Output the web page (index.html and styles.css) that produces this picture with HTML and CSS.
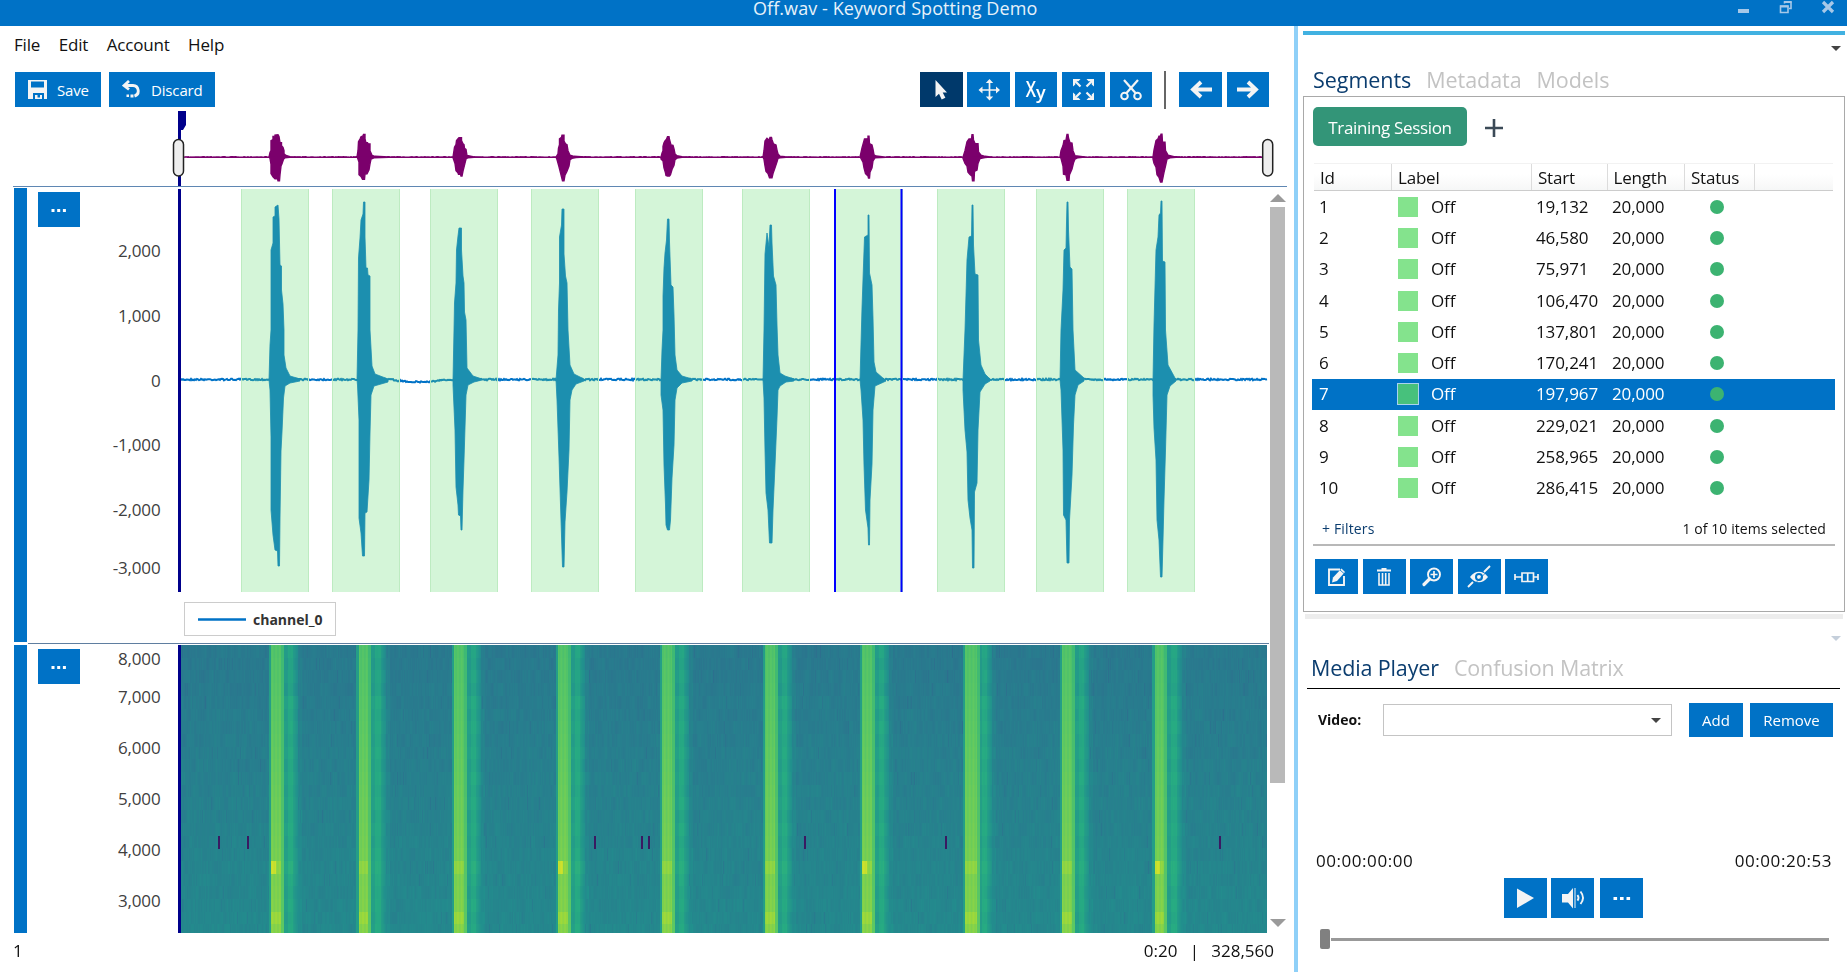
FILE: index.html
```html
<!DOCTYPE html>
<html lang="en">
<head>
<meta charset="utf-8">
<title>Off.wav - Keyword Spotting Demo</title>
<link rel="stylesheet" href="styles.css">
</head>
<body>
<header class="titlebar">
  <h1 class="title">Off.wav - Keyword Spotting Demo</h1>
  <svg class="win-controls" width="100" height="16" viewBox="0 0 100 16">
    <rect x="0" y="9" width="11" height="4" fill="#a6c8e8"/>
    <path d="M46.500 3.500V2H53v6.500h-2M42.500 6H50v6.500h-7.500z" fill="none" stroke="#a6c8e8" stroke-width="1.600"/>
    <path d="M42 6.500h8.500M46 2h7.500" stroke="#a6c8e8" stroke-width="2.200"/>
    <path d="M85 2l10 10M95 2L85 12" stroke="#a6c8e8" stroke-width="3.200"/>
  </svg>
</header>
<div class="workspace">
  <main class="editor">
    <nav class="menu"><span>File</span><span>Edit</span><span>Account</span><span>Help</span></nav>
    <div class="toolbar">
      <button class="btn save"><svg width="19" height="19" viewBox="0 0 19 19"><path fill="#f4f4f4" fill-rule="evenodd" d="M0 0h19v19h-3v-6H5v6H0zM3 1.500v6h13v-6zM7 15h2.500v2.500H12V15h2v4H7z"/></svg><span>Save</span></button>
      <button class="btn discard"><svg width="19" height="19" viewBox="0 0 19 19"><path d="M7 1L2 5.500L7 9.500M2.500 5.500H11a5.500 5.500 0 0 1 1.500 10.700" fill="none" stroke="#f4f4f4" stroke-width="2.800"/><path d="M8.500 14.500h3v3h-3zM4.500 14.500h2.500v2.500H4.500z" fill="#f4f4f4"/></svg><span>Discard</span></button>
      <div class="tools">
        <button class="tool active"><svg width="42" height="35" viewBox="0 0 42 35"><path fill="#f4f4f4" d="M15.500 8v17l3.500-3.300 2.700 5.800 3.700-1.700-2.700-5.300h4.300z"/></svg></button>
        <button class="tool"><svg width="42" height="35" viewBox="0 0 42 35"><path d="M12 18h19M21.500 9v18" stroke="#f4f4f4" stroke-width="1.700"/><path fill="#f4f4f4" d="M21.500 7l3.700 4h-7.400zM21.500 28.500l3.700-4h-7.400zM10.500 18l4-3.600v7.200zM32 18l-4-3.600v7.200z"/></svg></button>
        <button class="tool xy"><span>X</span><span class="y">y</span></button>
        <button class="tool"><svg width="42" height="35" viewBox="0 0 42 35"><path d="M13 9l5.500 5.500M30 9l-5.500 5.500M13 26l5.500-5.500M30 26l-5.500-5.500" stroke="#f4f4f4" stroke-width="2.200"/><path fill="#f4f4f4" d="M11 7h7.500l-2 2.300h-3.200v3.200l-2.300 2zM32 7h-7.500l2 2.300h3.200v3.200l2.300 2zM11 28h7.500l-2-2.300h-3.200v-3.200l-2.300-2zM32 28h-7.500l2-2.300h3.200v-3.200l2.300-2z"/></svg></button>
        <button class="tool"><svg width="42" height="35" viewBox="0 0 42 35"><g fill="none" stroke="#f4f4f4" stroke-width="2"><circle cx="14.500" cy="24" r="3.300"/><circle cx="27.500" cy="24" r="3.300"/><path d="M16.500 21L28 8M25.500 21L14 8" stroke-width="2.200"/></g></svg></button>
        <i class="tool-sep"></i>
        <button class="tool"><svg width="42" height="35" viewBox="0 0 42 35"><path d="M32 17.500H13M21 10L13 17.500l8 7.500" fill="none" stroke="#f4f4f4" stroke-width="3.800"/></svg></button>
        <button class="tool"><svg width="42" height="35" viewBox="0 0 42 35"><path d="M10 17.500h19M21 10L29 17.500l-8 7.500" fill="none" stroke="#f4f4f4" stroke-width="3.800"/></svg></button>
      </div>
    </div>
    <svg class="overview" width="1294" height="80" viewBox="0 108 1294 80">
      <path d="M178 111h8v14l-3 5h-2v56h-3z" fill="#00008b"/>
      <path id="overview-wave" fill="#7b006c" stroke="#7b006c" stroke-width="1.400"/>
      <path d="M13 186.500H1287" stroke="#5f87b3"/>
      <rect x="173.500" y="139.500" width="10" height="36.500" rx="5" fill="#eee" stroke="#222" stroke-width="1.500"/>
      <rect x="1262.700" y="139.500" width="10" height="36.500" rx="5" fill="#eee" stroke="#222" stroke-width="1.500"/>
    </svg>
    <div class="tracks">
      <div class="track-list">
        <section class="track wave-track">
          <i class="grip"></i>
          <button class="more"><svg width="42" height="35" viewBox="0 0 42 35"><path d="M13.500 18.500h15" stroke="#fff" stroke-width="3" stroke-dasharray="3 2.700"/></svg></button>
          <svg class="plot" width="1188" height="454" viewBox="80 188 1188 454">
            <g class="axis"><text x="160.500" y="256.500">2,000</text><text x="160.500" y="321.500">1,000</text><text x="160.500" y="386.500">0</text><text x="160.500" y="450.500">-1,000</text><text x="160.500" y="515.500">-2,000</text><text x="160.500" y="573.500">-3,000</text></g>
            <path id="noise" fill="none" stroke="#0072c6" stroke-width="2"/>
            <path id="wave" fill="#0072c6" stroke="#0072c6" stroke-width=".8"/>
            <g id="regions" class="regions"></g>
            <path d="M835 189v403M901.500 189v403" stroke="#00f" stroke-width="2"/>
            <path d="M179.500 189v403" stroke="#00008b" stroke-width="3"/>
            <rect x="184.500" y="602.500" width="151" height="33" fill="#fff" stroke="#ccc"/>
            <path d="M198 619.500h48" stroke="#0072c6" stroke-width="2.500"/>
            <text class="legend" x="253" y="625">channel_0</text>
          </svg>
        </section>
        <section class="track spec-track">
          <i class="grip"></i>
          <button class="more"><svg width="42" height="35" viewBox="0 0 42 35"><path d="M13.500 18.500h15" stroke="#fff" stroke-width="3" stroke-dasharray="3 2.700"/></svg></button>
          <svg class="plot" width="98" height="288" viewBox="80 645 98 288">
            <g class="axis"><text x="160.500" y="664.500">8,000</text><text x="160.500" y="703">7,000</text><text x="160.500" y="754">6,000</text><text x="160.500" y="805">5,000</text><text x="160.500" y="855.500">4,000</text><text x="160.500" y="906.500">3,000</text></g>
          </svg>
          <canvas class="spectrogram" id="spectrogram" width="1089" height="288"></canvas>
        </section>
      </div>
      <div class="scrollbar"><i class="up"></i><i class="thumb"></i><i class="down"></i></div>
    </div>
    <footer class="status"><span>1</span><span class="position">0:20&nbsp; |&nbsp; 328,560</span></footer>
  </main>
  <aside class="side">
    <div class="accent"></div>
    <div class="caret-row"><i class="caret"></i></div>
    <div class="tabs"><span class="on">Segments</span><span>Metadata</span><span>Models</span></div>
    <section class="panel">
      <div class="session"><span class="chip">Training Session</span><svg width="18" height="18" viewBox="0 0 18 18"><path d="M0 9h18M9 0v18" stroke="#3b4a57" stroke-width="2.600"/></svg></div>
      <div class="row head"><span>Id</span><span>Label</span><span>Start</span><span>Length</span><span>Status</span><span></span></div>
      <div id="rows"></div>
      <div class="filters"><a>+ Filters</a><span>1 of 10 items selected</span></div>
      <div class="actions">
        <button><svg width="43" height="35" viewBox="0 0 43 35"><path d="M25 10.500H14v15.500h15V17" fill="none" stroke="#f4f4f4" stroke-width="1.900"/><path fill="#f4f4f4" d="M17 23.500l1-5L26.500 9.500l3.500 3.500L22 22z"/><path d="M25 11l4 3.500" stroke="#0072c6" stroke-width=".8"/></svg></button>
        <button><svg width="43" height="35" viewBox="0 0 43 35"><path d="M14 11.500h14M18.500 10h5" stroke="#f4f4f4" stroke-width="1.900"/><path d="M16 14v12h10V14M19.500 14v12M22.700 14v12" fill="none" stroke="#f4f4f4" stroke-width="1.600"/></svg></button>
        <button><svg width="43" height="35" viewBox="0 0 43 35"><circle cx="24" cy="15.500" r="6" fill="none" stroke="#f4f4f4" stroke-width="1.900"/><path d="M20.500 15.500h7M24 12v7" stroke="#f4f4f4" stroke-width="1.700"/><path d="M19.500 20l-5.500 5.500" stroke="#f4f4f4" stroke-width="3.200" stroke-linecap="round"/></svg></button>
        <button><svg width="43" height="35" viewBox="0 0 43 35"><path d="M12 18c5-7 13-7 18 0c-5 7-13 7-18 0z" fill="#f4f4f4"/><circle cx="21" cy="18" r="4" fill="#0072c6"/><circle cx="21" cy="18" r="2" fill="#f4f4f4"/><path d="M10 28l5-5M26 13l6-6" stroke="#f4f4f4" stroke-width="1.900"/><path d="M16 25.500L29 12.500" stroke="#0072c6" stroke-width=".7"/></svg></button>
        <button><svg width="43" height="35" viewBox="0 0 43 35"><path d="M10 18h7M28.500 18H33M10 15v6M33 15v6M17 14h11.500v8.500H17zM22.700 14v8.500" fill="none" stroke="#f4f4f4" stroke-width="1.700"/></svg></button>
      </div>
    </section>
    <div class="splitter"></div>
    <div class="caret-row lower"><i class="caret light"></i></div>
    <div class="tabs media-tabs"><span class="on">Media Player</span><span>Confusion Matrix</span></div>
    <section class="media">
      <div class="video"><b>Video:</b><div class="select"><i class="caret"></i></div><button class="add">Add</button><button class="remove">Remove</button></div>
      <div class="times"><span>00:00:00:00</span><span>00:00:20:53</span></div>
      <div class="player">
        <button><svg width="43" height="40" viewBox="0 0 43 40"><path d="M13 10.500L30 20 13 30z" fill="#f4f4f4"/></svg></button>
        <button><svg width="43" height="40" viewBox="0 0 43 40"><path d="M11 16h6l5-6v20.500l-5-6h-6z" fill="#f4f4f4"/><path d="M24 10v20" stroke="#f4f4f4"/><path d="M26.500 17q2 2.800 0 5.600M29.500 13.500q5 6.300 0 12.500" fill="none" stroke="#f4f4f4" stroke-width="1.900"/></svg></button>
        <button class="gap"><svg width="43" height="40" viewBox="0 0 43 40"><path d="M13.500 20.500h17" stroke="#fff" stroke-width="3.200" stroke-dasharray="3.600 2.900"/></svg></button>
      </div>
      <div class="slider"><i class="knob"></i><i class="line"></i></div>
    </section>
  </aside>
</div>
<script src="app.js"></script>
</body>
</html>
```

FILE: styles.css
```css
* { box-sizing: border-box; }
body { margin: 0; width: 1847px; height: 972px; overflow: hidden; background: #fff; color: #111; font: 17px/24px "Open Sans", "Noto Sans", sans-serif; display: flex; flex-direction: column; }
button { border: 0; padding: 0; margin: 0; background: #0072c6; color: #fff; font: 15px/20px "Open Sans", "Noto Sans", sans-serif; display: flex; align-items: center; justify-content: center; }
svg, canvas, i { display: block; flex: none; }

.titlebar { height: 26px; background: #0072c6; display: flex; align-items: flex-start; }
.title { margin: -5px 0 0 753px; width: 985px; color: #e6f1fa; font-size: 18px; line-height: 26px; font-weight: 400; letter-spacing: .07px; white-space: nowrap; }
.workspace { flex: 1; min-height: 0; display: flex; }

.editor { width: 1294px; display: flex; flex-direction: column; }
.menu { height: 46px; padding: 7px 0 0 14px; display: flex; gap: 18.500px; letter-spacing: -.18px; }
.toolbar { height: 36px; padding-left: 15px; display: flex; align-items: flex-start; }
.btn { height: 35px; justify-content: flex-start; padding-left: 13px; gap: 10px; letter-spacing: -.15px; }
.save { width: 86px; margin-right: 8px; }
.discard { width: 106px; }
.tools { margin-left: 705px; display: flex; gap: 4.900px; }
.tool { width: 42.500px; height: 35px; }
.tool.active { background: #00396b; }
.xy { font-size: 22px; font-weight: 600; }
.xy span { transform: translateY(-2px) scaleX(.75); }
.xy .y { font-size: 18px; transform: translate(-2px, 2px); }
.tool-sep { width: 2px; height: 38px; margin: -1px 8px 0 7.500px; background: #666; }

.tracks { display: flex; height: 745px; }
.track-list { width: 1269px; padding-left: 14px; }
.track { display: flex; align-items: flex-start; }
.wave-track { height: 457px; }
.spec-track { height: 288px; }
.wave-track { background: linear-gradient(#5f7ea0, #5f7ea0) 14px 455px / 1241px 1px no-repeat; }
.grip { width: 13px; height: 454px; background: #0072c6; }
.spec-track .grip { height: 288px; }
.more { width: 42px; height: 35px; margin: 4px 0 0 11px; }
.axis { fill: #404040; font-size: 17px; text-anchor: end; letter-spacing: -.15px; }
.legend { font-size: 14px; font-weight: 700; fill: #333; }
.regions rect { fill: rgba(100, 220, 115, .28); }
.regions path { stroke: #bdebc1; stroke-width: 1; }
.scrollbar { width: 17px; padding: 6px 0 0; display: flex; flex-direction: column; align-items: center; }
.up { border: 8px solid transparent; border-top: 0; border-bottom-color: #9a9a9a; }
.thumb { width: 15px; height: 576px; margin-top: 5px; background: #b9b9b9; }
.down { border: 8px solid transparent; border-bottom: 0; border-top-color: #9a9a9a; margin-top: 136px; }
.status { display: flex; justify-content: space-between; padding: 6px 20px 0 13px; }
.position { word-spacing: 1.700px; }

.side { width: 553px; border-left: 4px solid #8fd0f8; padding: 5px 2px 0 5px; display: flex; flex-direction: column; }
.accent { height: 4px; background: #41b1e1; }
.caret-row { height: 30px; display: flex; justify-content: flex-end; padding: 11px 4px 0 0; }
.caret { border: 5px solid transparent; border-top-color: #444; border-bottom: 0; }
.caret.light { border-top-color: #c5cfdb; }
.tabs { height: 31px; padding-left: 10px; display: flex; gap: 15px; font-size: 21.500px; line-height: 29px; letter-spacing: -.05px; color: #c3c3c3; white-space: nowrap; }
.tabs .on { color: #0b3d6f; }

.panel { height: 516px; border: 1px solid #a9a9a9; }
.session { height: 66px; padding: 10px 0 0 9px; display: flex; gap: 18px; }
.session svg { margin-top: 12px; }
.chip { width: 154px; height: 39px; border-radius: 5px; background: #339578; color: #fff; line-height: 41px; letter-spacing: -.35px; text-align: center; white-space: nowrap; }
.row { display: grid; grid-template-columns: 79px 140px 76px 77px 70px 1fr; height: 31.300px; margin: 0 9px 0 8px; align-items: center; letter-spacing: -.1px; }
.row > * { padding-left: 7px; }
.row > :nth-child(3), .row > :nth-child(4) { padding-left: 5px; }
.head { height: 28px; margin: 0 11px 0 10px; grid-template-columns: 78px 140px 75.500px 77.500px 70px 1fr; border-top: 1px solid #f2f2f2; border-bottom: 1px solid #ccc; background: linear-gradient(#fff 40%, #f6f7f7); letter-spacing: -.2px; }
.head span { border-right: 1px solid #dcdcdc; height: 26px; line-height: 27px; }
.row.head > span { padding-left: 6px; }
.head span:last-child { border: 0; }
.row.selected { background: #0072c6; color: #fff; }
.label { display: flex; align-items: center; gap: 13px; }
.label i { width: 20px; height: 20px; background: #84e38d; }
.selected .label i { width: 22px; height: 22px; margin: 0 -1px; background: #47c17c; border: 1px solid #a9d3ee; }
.dot { width: 14px; height: 14px; margin-left: 26px; border-radius: 50%; background: #3cb371; }
.filters { margin: 14px 9px 0 9px; height: 28px; padding: 1px 9px 0; display: flex; justify-content: space-between; border-bottom: 2px solid #b8b8b8; font-size: 14px; line-height: 20px; }
.filters a { color: #0b3d6f; letter-spacing: .15px; }
.filters span { letter-spacing: .08px; }
.actions { display: flex; gap: 4.500px; padding: 13px 0 0 11px; }
.actions button { width: 43px; height: 35px; }

.splitter { height: 5px; margin: 2px 2px 0; background: #ededed; }
.caret-row.lower { height: 34px; padding-top: 17px; }
.tabs.media-tabs { height: 36px; margin: 0 5px 0 4px; padding-left: 4px; border-bottom: 1px solid #000; letter-spacing: -.13px; }
.media { display: flex; flex-direction: column; }
.video { height: 48px; padding: 14px 0 0 15px; display: flex; align-items: center; font-size: 14px; }
.video b { width: 65px; }
.video button { height: 34px; }
.select { width: 289px; height: 32px; border: 1px solid #c4c4c4; display: flex; justify-content: flex-end; align-items: center; padding-right: 10px; }
.video .add { width: 54px; margin: 0 7px 0 17px; }
.remove { width: 83px; }
.times { display: flex; justify-content: space-between; margin-top: 112px; padding: 0 13px 0 13px; letter-spacing: .55px; }
.player { display: flex; gap: 4.500px; margin: 5px 0 0 201px; }
.player button { width: 42.500px; height: 40px; }
.player .gap { margin-left: 2px; }
.slider { display: flex; align-items: center; gap: 1px; margin: 11px 0 0 17px; }
.knob { width: 10px; height: 20px; background: #808080; border-radius: 2px; }
.line { width: 498px; height: 3px; background: #999; }
```

FILE: app.js
```js
// Segment table
const starts = ["19,132", "46,580", "75,971", "106,470", "137,801", "170,241", "197,967", "229,021", "258,965", "286,415"];
document.getElementById("rows").innerHTML = starts.map((s, i) =>
  `<div class="row${i === 6 ? " selected" : ""}"><span>${i + 1}</span><span class="label"><i></i>Off</span><span>${s}</span><span>20,000</span><i class="dot"></i></div>`).join("");

// Upper and lower envelopes of each utterance: x y pairs, left to right
const bursts = [
  ["269 380 270 345 271 330 271 250 273 243 273 217 275 216 275 207 278 205 279 219 280 265 281.500 266 281.500 290 283 304 284 330 284 355 286 368 290 376 300 379", "270 390 271 437 271 510 273 535 275 550 277.500 551 278 566 279.500 566 280 518 281 451 282 432 283.500 398 285 386 290 383 300 381"],
  ["357 380 358 330 358.500 258 360 238 361 220 363 214 363.500 202 365 202 365 237 366 268 367.500 268 368 275 370 276 370 330 372 366 375 374 388 379", "357.500 385 359 420 359 518 361 533 362.500 556 364.500 556 365 513 367 512 369 480 370 433 371 395 374 386 388 382"],
  ["453 380 454 330 454.500 303 456 283 456.500 250 458 236 459 228 461.500 228 461.500 250 463 276 464 283 464.500 312 466 320 467 368 473 376 482 379", "453 385 455 430 456 487 458 505 458.500 515 460.500 516 461 530 462 530 463 490 464 460 466 395 468 385 474 382 482 380"],
  ["556 380 558 355 558.500 310 559.500 283 559.500 237 561.500 225 562 209 564 209 564 254 565.500 276 567 283 568 330 570 365 574 374 584 379", "557 400 559 457 561 520 562.500 567 564 567 565 522 567 492 569 450 570 400 572 390 576 384 584 381"],
  ["661 380 662 350 663 330 663 296 664 268 665 253 666.500 240 667.500 219 669 219 669.500 242 671 285 673 287 674 315 675 355 677 370 682 376 692 379", "661 395 663 410 664 465 665.500 505 666 525 667.500 530 669.500 530 670.500 520 672 478 674 445 675 400 677 388 682 383 692 381"],
  ["763 380 764 330 765 254 767 233 769 247 770 225 771.500 225 772 243 773.500 276 776 285 777 325 778 355 780 373 785 376 794 379", "764 398 765 450 766 493 768 510 769.500 543 772 543 773 510 775 465 777 418 778 390 780 386 786 382 794 381"],
  ["860 380 862 308 864.500 237 868 235 868 215 869 215 869.500 273 872 285 873 318 874 362 876 372 884 379", "861 390 863 420 864 465 865.500 510 868 528 868.500 545 869.500 545 870 500 872 464 873 410 875 386 886 381"],
  ["963 380 965 330 967 260 969 237 971.500 236 972 205 973 205 973.500 245 975 274 978 275 978.500 340 981 365 985 374 990 379", "963 390 965 430 967 452 968 500 970 518 972 530 972.500 568 974 568 974.500 492 977 483 978 430 980 392 985 384 990 381"],
  ["1060 380 1061 330 1063 290 1064 250 1066 248 1066.500 223 1067 202 1068 202 1068.500 230 1070 267 1072 269 1073 330 1075 370 1084 378", "1061 390 1063 450 1063.500 515 1066 520 1067 563 1069 563 1069.500 520 1072 475 1073.500 425 1075 395 1078 385 1084 381"],
  ["1153 380 1154 325 1156 250 1158 237 1159 215 1160.500 213 1161 201 1162 201 1162.500 261 1165 262 1165.500 330 1168 365 1175 378", "1153 395 1154 428 1156 460 1157 520 1159 540 1160.500 577 1162 577 1163 540 1164 500 1165.500 450 1167 395 1170 386 1176 381"]
].map(pair => pair.map(s => {
  const n = s.split(" ").map(Number), pts = [];
  for (let i = 0; i < n.length; i += 2) pts.push([n[i], n[i + 1]]);
  return pts;
}));

let seed = 7;
const rand = () => (seed = (seed * 16807) % 2147483647) / 2147483647;
const outline = map => bursts.map(([a, b]) => "M" + [...a, ...b.slice().reverse()].map(map).join("L") + "Z").join("");

document.getElementById("wave").setAttribute("d", outline(([x, y]) => `${x} ${y}`));
let quiet = "", overviewLine = "";
for (let x = 180; x <= 1267; x += 1) {
  const drift = x > 390 && x < 450 ? 2.400 * Math.sin((x - 390) / 60 * Math.PI) : 0;
  quiet += `${x === 180 ? "M" : "L"}${x} ${(379.500 + drift + (rand() - 0.500) * 1.600).toFixed(1)}`;
  overviewLine += `${x === 180 ? "M" : "L"}${x} ${(157 + (rand() - 0.500) * 0.600).toFixed(1)}`;
}
document.getElementById("noise").setAttribute("d", quiet);
for (let x = 1267; x >= 180; x -= 8) overviewLine += `L${x} 157.200`;
document.getElementById("overview-wave").setAttribute("d", overviewLine + outline(([x, y]) => `${x} ${(157 + (y - 379.500) * 0.127).toFixed(1)}`));

document.getElementById("regions").innerHTML = [241, 332, 430, 531, 635, 742, 835, 937, 1036, 1127].map(x =>
  `<rect x="${x}" y="189" width="68" height="403"/><path d="M${x + 0.500} 189v403M${x + 67.500} 189v403"/>`).join("");

// Spectrogram
const stops = [[68, 1, 84], [71, 44, 122], [59, 81, 139], [44, 113, 142], [33, 144, 141], [39, 173, 129], [92, 200, 99], [170, 220, 50], [253, 231, 37]];
function color(v) {
  const p = Math.max(0, Math.min(7.999, v * 8)), i = Math.floor(p), f = p - i;
  return "rgb(" + stops[i].map((c, k) => Math.round(c + (stops[i + 1][k] - c) * f)).join(",") + ")";
}
const ctx = document.getElementById("spectrogram").getContext("2d");
const onsets = [271, 358.500, 454, 558, 662, 765, 862, 965, 1062, 1154.500];
const rowHeight = 12.700;
for (let r = 0; r < 23; r++) {
  const y0 = Math.round(r * rowHeight), y1 = Math.round((r + 1) * rowHeight), depth = r / 22;
  let slow = 0;
  for (let x = 0; x < 1089; x++) {
    slow = slow * 0.600 + (rand() - 0.500) * 0.022;
    let v = 0.408 + depth * 0.058 + slow + (rand() - 0.500) * 0.012;
    if (rand() < 0.020) v -= 0.030;
    const px = x + 178;
    onsets.forEach((o, i) => {
      const d = px - o, w = i === 7 ? 15 : 12.500;
      if (d > -3 && d < 0) v = 0.560;
      else if (d >= 0 && d < w - 3) v = 0.725 + depth * 0.090 + (r === 17 || r === 21 ? 0.035 : 0) + Math.sin(d * 1.700 + i) * 0.012 + (r === 17 && d < 5 && i % 3 === 0 ? 0.090 : 0);
      else if (d >= w - 3 && d < w) v = 0.680 + depth * 0.070;
      else if (d >= w && d < 27) v = 0.555 + (d > 16 && d < 22 ? 0.045 : 0) + (r % 2 ? 0 : 0.014) + (r === 17 ? 0.030 : 0) + slow * 0.500 - (d > 22 ? (d - 22) * 0.014 : 0) - (r < 4 ? 0.020 : 0);
      else if (d >= 27 && d < 31) v += 0.025;
    });
    ctx.fillStyle = color(v);
    ctx.fillRect(x, y0, 1, y1 - y0);
  }
}
ctx.fillStyle = "#3a1a62";
[218, 247, 594, 641, 648, 804, 945, 1219].forEach(x => ctx.fillRect(x - 178, 191, 2, 13));
ctx.fillStyle = "#00008b";
ctx.fillRect(0, 0, 3, 288);
```
